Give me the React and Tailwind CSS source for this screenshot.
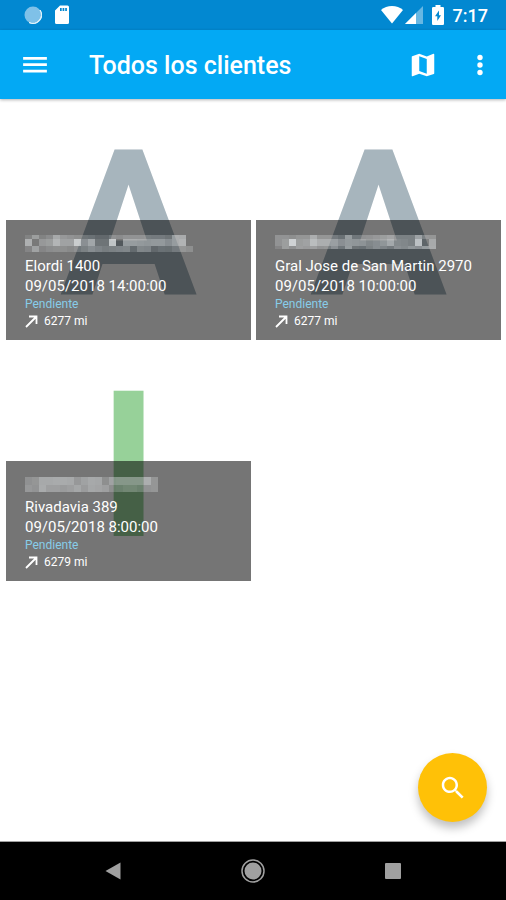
import { useState } from "react";

// each row: top, height, then one white opacity (in %) per 7px cell
const clients = [
  {
    id: 1,
    letter: "A",
    color: "text-[#a7b5bd]",
    address: "Elordi 1400",
    date: "09/05/2018 14:00:00",
    distance: "6277 mi",
    mask: [
      { y: 1, h: 4, cells: [12, 34, 12, 20, 44, 30, 26, 22, 22, 20, 14, 14, 24, 20, 26, 26, 26, 28, 26, 26, 22, 48, 46] },
      { y: 5, h: 7, cells: [50, 4, 30, 34, 54, 38, 38, 74, 40, 54, 22, 22, 74, 4, 48, 48, 46, 44, 46, 46, 38, 48, 52] },
      { y: 12, h: 6, cells: [14, 38, 14, 20, 22, 22, 18, 24, 30, 38, 32, 28, 30, 32, 34, 16, 34, 32, 14, 20, 18, 26, 28, 22] },
    ],
  },
  {
    id: 2,
    letter: "A",
    color: "text-[#a7b5bd]",
    address: "Gral Jose de San Martin 2970",
    date: "09/05/2018 10:00:00",
    distance: "6277 mi",
    mask: [
      { y: 1, h: 4, cells: [26, 26, 22, 28, 28, 48, 28, 28, 26, 20, 48, 24, 24, 26, 30, 34, 40, 30, 30, 30, 52, 30, 28] },
      { y: 5, h: 7, cells: [26, 34, 78, 34, 38, 60, 48, 48, 50, 40, 46, 44, 42, 34, 38, 44, 56, 36, 34, 30, 72, 12, 44] },
      { y: 12, h: 3, cells: [14, 34, 24, 36, 32, 36, 26, 28, 40, 24, 48, 22, 20, 30, 38, 32, 26, 40, 36, 44, 40, 48, 46] },
    ],
  },
  {
    id: 3,
    letter: "I",
    color: "text-[#97d199]",
    address: "Rivadavia 389",
    date: "09/05/2018 8:00:00",
    distance: "6279 mi",
    mask: [
      { y: 2, h: 8, cells: [24, 28, 44, 44, 46, 46, 44, 30, 38, 44, 42, 22, 38, 40, 40, 40, 40, 48, 28] },
      { y: 10, h: 7, cells: [30, 26, 46, 36, 36, 32, 36, 42, 32, 42, 40, 36, 22, 24, 28, 28, 24, 26, 28] },
    ],
  },
];

function MaskedName({ rows }) {
  return (
    <svg width="168" height="20" shapeRendering="crispEdges" role="img" aria-label="Cliente">
      {rows.map((row) =>
        row.cells.map((alpha, i) => (
          <rect
            key={`${row.y}-${i}`}
            x={i * 7}
            y={row.y}
            width="7"
            height={row.h}
            fill="#e8ecee"
            fillOpacity={alpha / 100}
          />
        ))
      )}
    </svg>
  );
}

function StatusBar() {
  return (
    <div className="flex h-[30px] items-center bg-[#0288d1] pr-[18px] pl-6 text-white">
      <svg width="18" height="18" viewBox="0 0 18 18">
        <circle cx="9" cy="9" r="8.5" fill="#7fc1e8" />
        <path d="M16 4A8.700 8.700 0 0 1 5 16.500A8.500 8.500 0 0 0 16 4Z" fill="#e3f3fb" stroke="#e3f3fb" />
      </svg>
      <svg className="ml-3" width="16" height="20" viewBox="0 0 16 20" fill="currentColor">
        <path
          fillRule="evenodd"
          d="M6 .5h7.500A1.500 1.500 0 0 1 15 2v15.500a1.500 1.500 0 0 1-1.500 1.500h-11A1.500 1.500 0 0 1 1 17.500V5.500ZM6 3v3h1.700V3Zm2.600 0v3h1.700V3Zm2.600 0v3h1.700V3Z"
        />
      </svg>
      <div className="flex-1" />
      <svg width="22" height="18" viewBox="0 0 22 18" fill="currentColor">
        <path d="M11 17.500 0 4C3 1.500 6.800 0 11 0s8 1.500 11 4Z" />
      </svg>
      <svg className="ml-[2px]" width="18" height="18" viewBox="0 0 18 18" fill="currentColor">
        <path d="M0 18 18 0v18Z" fillOpacity="0.4" />
        <path d="M0 18 11 7v11Z" />
      </svg>
      <svg className="ml-[9px]" width="12" height="20" viewBox="0 0 12 20">
        <path
          fill="currentColor"
          d="M3.500 0h5v2H10.500A1.300 1.300 0 0 1 12 3.300v15.200A1.300 1.300 0 0 1 10.700 20H1.300A1.300 1.300 0 0 1 0 18.500V3.300A1.300 1.300 0 0 1 1.300 2H3.500Z"
        />
        <path fill="#0288d1" d="M7 5.500 3 11.300H5.300V16L9 10.200H7Z" />
      </svg>
      <span className="ml-[9px] pt-[2px] text-[18px] leading-6 font-medium">7:17</span>
    </div>
  );
}

function ClientCard({ client }) {
  return (
    <article className="grid h-60">
      <div
        aria-hidden="true"
        className={`col-start-1 row-start-1 flex items-center justify-center pt-[11px] text-[204px] leading-none font-bold ${client.color}`}
      >
        {client.letter}
      </div>
      <div className="z-10 col-start-1 row-start-1 h-[120px] self-end bg-black/54 pt-[14px] pl-[19px] text-white">
        <MaskedName rows={client.mask} />
        <p className="mt-[2px] text-[15px] leading-5 whitespace-nowrap">{client.address}</p>
        <p className="text-[15px] leading-5">{client.date}</p>
        <p className="text-[12px] leading-4 text-[#87cde9]">Pendiente</p>
        <p className="flex items-center gap-[6px] text-[12px] leading-[18px]">
          <svg width="13" height="13" viewBox="0 0 13 13" fill="none" stroke="currentColor" strokeWidth="1.800">
            <path d="M1 12 11 2M4 1.500h7.500V9" />
          </svg>
          {client.distance}
        </p>
      </div>
    </article>
  );
}

export default function App() {
  const [menuOpen, setMenuOpen] = useState(false);

  return (
    <div className="flex min-h-screen flex-col bg-white font-[Roboto,sans-serif]">
      <StatusBar />

      <header className="z-20 flex h-[69px] items-center bg-[#03a9f4] pr-[15px] pl-[20px] text-white shadow-[0_1px_3px_rgba(0,0,0,0.3)]">
        <button
          type="button"
          aria-label="Menú"
          aria-expanded={menuOpen}
          onClick={() => setMenuOpen(!menuOpen)}
        >
          <svg width="30" height="30" viewBox="0 0 24 24" fill="currentColor">
            <path d="M2.500 18h19v-2.200h-19Zm0-5.200h19v-2.200h-19Zm0-7.300v2.200h19V5.500Z" />
          </svg>
        </button>
        <h1 className="ml-[39px] flex-1 pt-[2px] text-[25px] leading-8 font-medium">Todos los clientes</h1>
        <button type="button" aria-label="Mapa">
          <svg width="30" height="30" viewBox="0 0 24 24" fill="currentColor">
            <path d="M20.500 3l-.16.03L15 5.100 9 3 3.360 4.900c-.21.07-.36.25-.36.48V20.500c0 .28.220.5.5.5l.16-.03L9 18.900l6 2.100 5.640-1.900c.21-.07.36-.25.36-.48V3.500c0-.28-.22-.5-.5-.5zM15 19l-6-2.110V5l6 2.110V19z" />
          </svg>
        </button>
        <button type="button" aria-label="Más opciones" className="ml-[31px]">
          <svg width="22" height="30" viewBox="0 0 22 30" fill="currentColor">
            <circle cx="11" cy="7.500" r="2.700" />
            <circle cx="11" cy="15" r="2.700" />
            <circle cx="11" cy="22.500" r="2.700" />
          </svg>
        </button>
      </header>

      <main className="relative flex-1 border-b border-[#a0a0a0]">
        <div className="grid grid-cols-2 gap-x-[5px] gap-y-px pt-px pr-[5px] pl-[6px]">
          {clients.map((client) => (
            <ClientCard key={client.id} client={client} />
          ))}
        </div>

        <button
          type="button"
          aria-label="Buscar"
          className="absolute right-[19px] bottom-[19px] z-20 flex size-[69px] items-center justify-center rounded-full bg-[#ffc107] text-white shadow-[0_6px_10px_rgba(0,0,0,0.25)]"
        >
          <svg width="30" height="30" viewBox="0 0 24 24" fill="currentColor">
            <path d="M15.500 14h-.79l-.28-.27C15.410 12.590 16 11.110 16 9.500 16 5.910 13.090 3 9.500 3S3 5.910 3 9.500 5.910 16 9.500 16c1.610 0 3.090-.59 4.230-1.570l.27.28v.79l5 4.990L20.490 19l-4.990-5zm-6 0C7.010 14 5 11.990 5 9.500S7.010 5 9.500 5 14 7.010 14 9.500 11.990 14 9.500 14z" />
          </svg>
        </button>
      </main>

      <nav className="grid h-[58px] grid-cols-[1fr_132px_132px_1fr] items-center bg-black text-[#a0a0a0]">
        <button type="button" aria-label="Atrás" className="flex justify-end">
          <svg width="16" height="24" viewBox="0 0 16 24" fill="currentColor">
            <path d="M15.500 3.500v17L.5 12Z" />
          </svg>
        </button>
        <button type="button" aria-label="Inicio" className="col-span-2 flex justify-center">
          <svg width="24" height="24" viewBox="0 0 24 24">
            <circle cx="12" cy="12" r="11" fill="none" stroke="currentColor" strokeWidth="1.500" />
            <circle cx="12" cy="12" r="8.500" fill="currentColor" />
          </svg>
        </button>
        <button type="button" aria-label="Recientes" className="flex justify-start">
          <svg width="16" height="24" viewBox="0 0 16 24" fill="currentColor">
            <rect x="0" y="4" width="16" height="16" rx="1" />
          </svg>
        </button>
      </nav>
    </div>
  );
}
